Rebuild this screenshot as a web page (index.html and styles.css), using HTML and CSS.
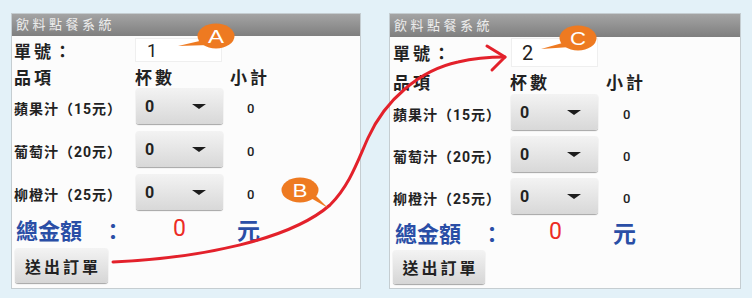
FILE: index.html
```html
<!DOCTYPE html>
<html lang="zh-Hant">
<head>
    <meta charset="UTF-8">
    <meta name="viewport" content="width=device-width, initial-scale=1.0">
    <title>飲料點餐系統</title>
    <link rel="stylesheet" href="styles.css">
</head>
<body>

    <div class="page">
        <!-- 送出前 -->
        <section class="panel">
            <div class="panel-title">飲料點餐系統</div>
            <div class="panel-body">
                <div class="order-row">
                    <span class="order-label">單號：</span>
                    <div class="order-no">1</div>
                </div>
                <div class="grid-head"><span>品項</span><span>杯數</span><span>小計</span></div>
                <div class="items">
                    <div class="item"><span class="item-name">蘋果汁（15元）</span><div class="select"><span>0</span><i class="caret"></i></div><span class="subtotal">0</span></div>
                    <div class="item"><span class="item-name">葡萄汁（20元）</span><div class="select"><span>0</span><i class="caret"></i></div><span class="subtotal">0</span></div>
                    <div class="item"><span class="item-name">柳橙汁（25元）</span><div class="select"><span>0</span><i class="caret"></i></div><span class="subtotal">0</span></div>
                </div>
                <div class="total">
                    <span class="total-label">總金額<span class="total-colon">：</span></span>
                    <span class="total-sum">0</span>
                    <span class="total-unit">元</span>
                </div>
                <button class="submit">送出訂單</button>
            </div>
        </section>

        <!-- 送出後 -->
        <section class="panel panel-after">
            <div class="panel-title">飲料點餐系統</div>
            <div class="panel-body">
                <div class="order-row">
                    <span class="order-label">單號：</span>
                    <div class="order-no">2</div>
                </div>
                <div class="grid-head"><span>品項</span><span>杯數</span><span>小計</span></div>
                <div class="items">
                    <div class="item"><span class="item-name">蘋果汁（15元）</span><div class="select"><span>0</span><i class="caret"></i></div><span class="subtotal">0</span></div>
                    <div class="item"><span class="item-name">葡萄汁（20元）</span><div class="select"><span>0</span><i class="caret"></i></div><span class="subtotal">0</span></div>
                    <div class="item"><span class="item-name">柳橙汁（25元）</span><div class="select"><span>0</span><i class="caret"></i></div><span class="subtotal">0</span></div>
                </div>
                <div class="total">
                    <span class="total-label">總金額<span class="total-colon">：</span></span>
                    <span class="total-sum">0</span>
                    <span class="total-unit">元</span>
                </div>
                <button class="submit">送出訂單</button>
            </div>
        </section>
    </div>

    <!-- 說明標註 -->
    <svg class="notes" width="752" height="298" viewBox="0 0 752 298">
        <path class="flow" d="M113 262 C 200 258 290 240 330 205 C 350 185 358 160 368 138 C 385 100 420 70 458 62 C 475 58 490 57 505 57"/>
        <path class="flow" d="M487 46 L505 57 L492 70"/>

        <g class="bubble">
            <path d="M204 40 L178 46 L209 45 Z"/>
            <ellipse cx="216" cy="36" rx="18.5" ry="12.5"/>
            <text x="216" y="43" textLength="16" lengthAdjust="spacingAndGlyphs">A</text>
        </g>
        <g class="bubble">
            <path d="M309 197 L328 208 L314 194 Z"/>
            <ellipse cx="300" cy="190" rx="18.5" ry="12.5"/>
            <text x="300" y="197" textLength="15" lengthAdjust="spacingAndGlyphs">B</text>
        </g>
        <g class="bubble">
            <path d="M566 42 L541 49 L570 47 Z"/>
            <ellipse cx="578" cy="38" rx="18.5" ry="12.5"/>
            <text x="578" y="45" textLength="16" lengthAdjust="spacingAndGlyphs">C</text>
        </g>
    </svg>

</body>
</html>
```

FILE: styles.css
```css
/* 頁面 */
body {
    margin: 0;
    width: 752px;
    height: 298px;
    position: relative;
    overflow: hidden;
    background-color: #e3f1f8;
    font-family: Roboto, "Noto Sans CJK TC", sans-serif;
    color: #222;
}

.page {
    display: flex;
    gap: 28px;
    padding: 13px 0 0 11px;
}

/* 手機畫面 */
.panel {
    box-sizing: border-box;
    width: 350px;
    border: 1px solid #c5cdd1;
    background-color: #fcfcfc;
}

.panel-title {
    height: 22px;
    line-height: 22px;
    padding-left: 4px;
    background: linear-gradient(#a4a4a4, #7f7f7f);
    color: #ededed;
    font-size: 13px;
    letter-spacing: 3.5px;
}

.panel-body {
    padding: 0 3px 4px 2px;
}

/* 單號 */
.order-row {
    display: flex;
    align-items: center;
    height: 28px;
}

.order-label {
    width: 121px;
    font-size: 17px;
    font-weight: 700;
    letter-spacing: 3px;
}

.order-no {
    box-sizing: border-box;
    width: 87px;
    height: 24px;
    line-height: 24px;
    padding-left: 11px;
    border: 1px solid #efefef;
    background-color: #fff;
    font-size: 18px;
}

/* 表格 */
.grid-head,
.item,
.total {
    display: grid;
    grid-template-columns: 122px 94px auto;
    align-items: center;
}

.grid-head {
    height: 24px;
    font-size: 17px;
    font-weight: 700;
    letter-spacing: 3px;
}

.grid-head span:nth-child(2) {
    margin-left: -1px;
}

.items {
    display: flex;
    flex-direction: column;
    gap: 7px;
}

.item {
    height: 36px;
}

.item-name {
    font-size: 14px;
    font-weight: 700;
    letter-spacing: 1px;
    padding-top: 4px;
}

.select {
    box-sizing: border-box;
    width: 87px;
    height: 36px;
    display: flex;
    align-items: center;
    justify-content: space-between;
    padding: 0 17px 0 9px;
    border-radius: 3px;
    background: linear-gradient(#f3f3f3, #d8d8d8);
    box-shadow: 0 1px 1px rgba(0, 0, 0, 0.35);
    font-size: 16px;
    font-weight: 700;
}

.caret {
    width: 0;
    height: 0;
    border-left: 7px solid transparent;
    border-right: 7px solid transparent;
    border-top: 5px solid #1c1c1c;
}

.subtotal {
    padding: 4px 0 0 17px;
    font-size: 13px;
    font-weight: 500;
}

/* 總金額 */
.total {
    height: 37px;
    font-weight: 700;
}

.total-label {
    padding-left: 2px;
    color: #2a4ea6;
    font-size: 22px;
}

.total-colon {
    margin-left: 20px;
}

.total-sum {
    padding-left: 37px;
    color: #ec2b25;
    font-size: 23px;
    font-weight: 400;
}

.total-unit {
    padding-left: 7px;
    color: #2a4ea6;
    font-size: 23px;
}

.submit {
    display: block;
    width: 93px;
    height: 35px;
    margin: 1px 0 0 1px;
    padding: 0 0 0 3px;
    border: none;
    border-radius: 3px;
    background: linear-gradient(#f3f3f3, #d6d6d6);
    box-shadow: 0 1px 1px rgba(0, 0, 0, 0.35);
    font-family: inherit;
    font-size: 16px;
    font-weight: 700;
    letter-spacing: 3px;
    color: #222;
}

/* 第二個畫面略有不同 */
.panel-after {
    width: 352px;
}

.panel-after .panel-title {
    height: 23px;
    line-height: 23px;
}

.panel-after .panel-body {
    padding-left: 3px;
}

.panel-after .order-row {
    height: 31px;
}

.panel-after .order-label {
    width: 118px;
}

.panel-after .order-no {
    height: 29px;
    line-height: 29px;
    font-size: 20px;
    padding-left: 10px;
}

.panel-after .grid-head {
    height: 26px;
}

.panel-after .grid-head,
.panel-after .item,
.panel-after .total {
    grid-template-columns: 118px 95px auto;
}

.panel-after .items {
    gap: 6px;
}

.panel-after .total {
    height: 35px;
}

.panel-after .total-sum {
    padding-left: 38px;
}

.panel-after .submit {
    width: 92px;
    height: 34px;
    margin-left: 0;
}

/* 標註 */
.notes {
    position: absolute;
    left: 0;
    top: 0;
    pointer-events: none;
}

.flow {
    fill: none;
    stroke: #e3212b;
    stroke-width: 3;
    stroke-linecap: round;
    stroke-linejoin: round;
}

.bubble path,
.bubble ellipse {
    fill: #ee7a21;
}

.bubble text {
    fill: #fff;
    font-family: "Liberation Sans", sans-serif;
    font-size: 19px;
    text-anchor: middle;
}
```
